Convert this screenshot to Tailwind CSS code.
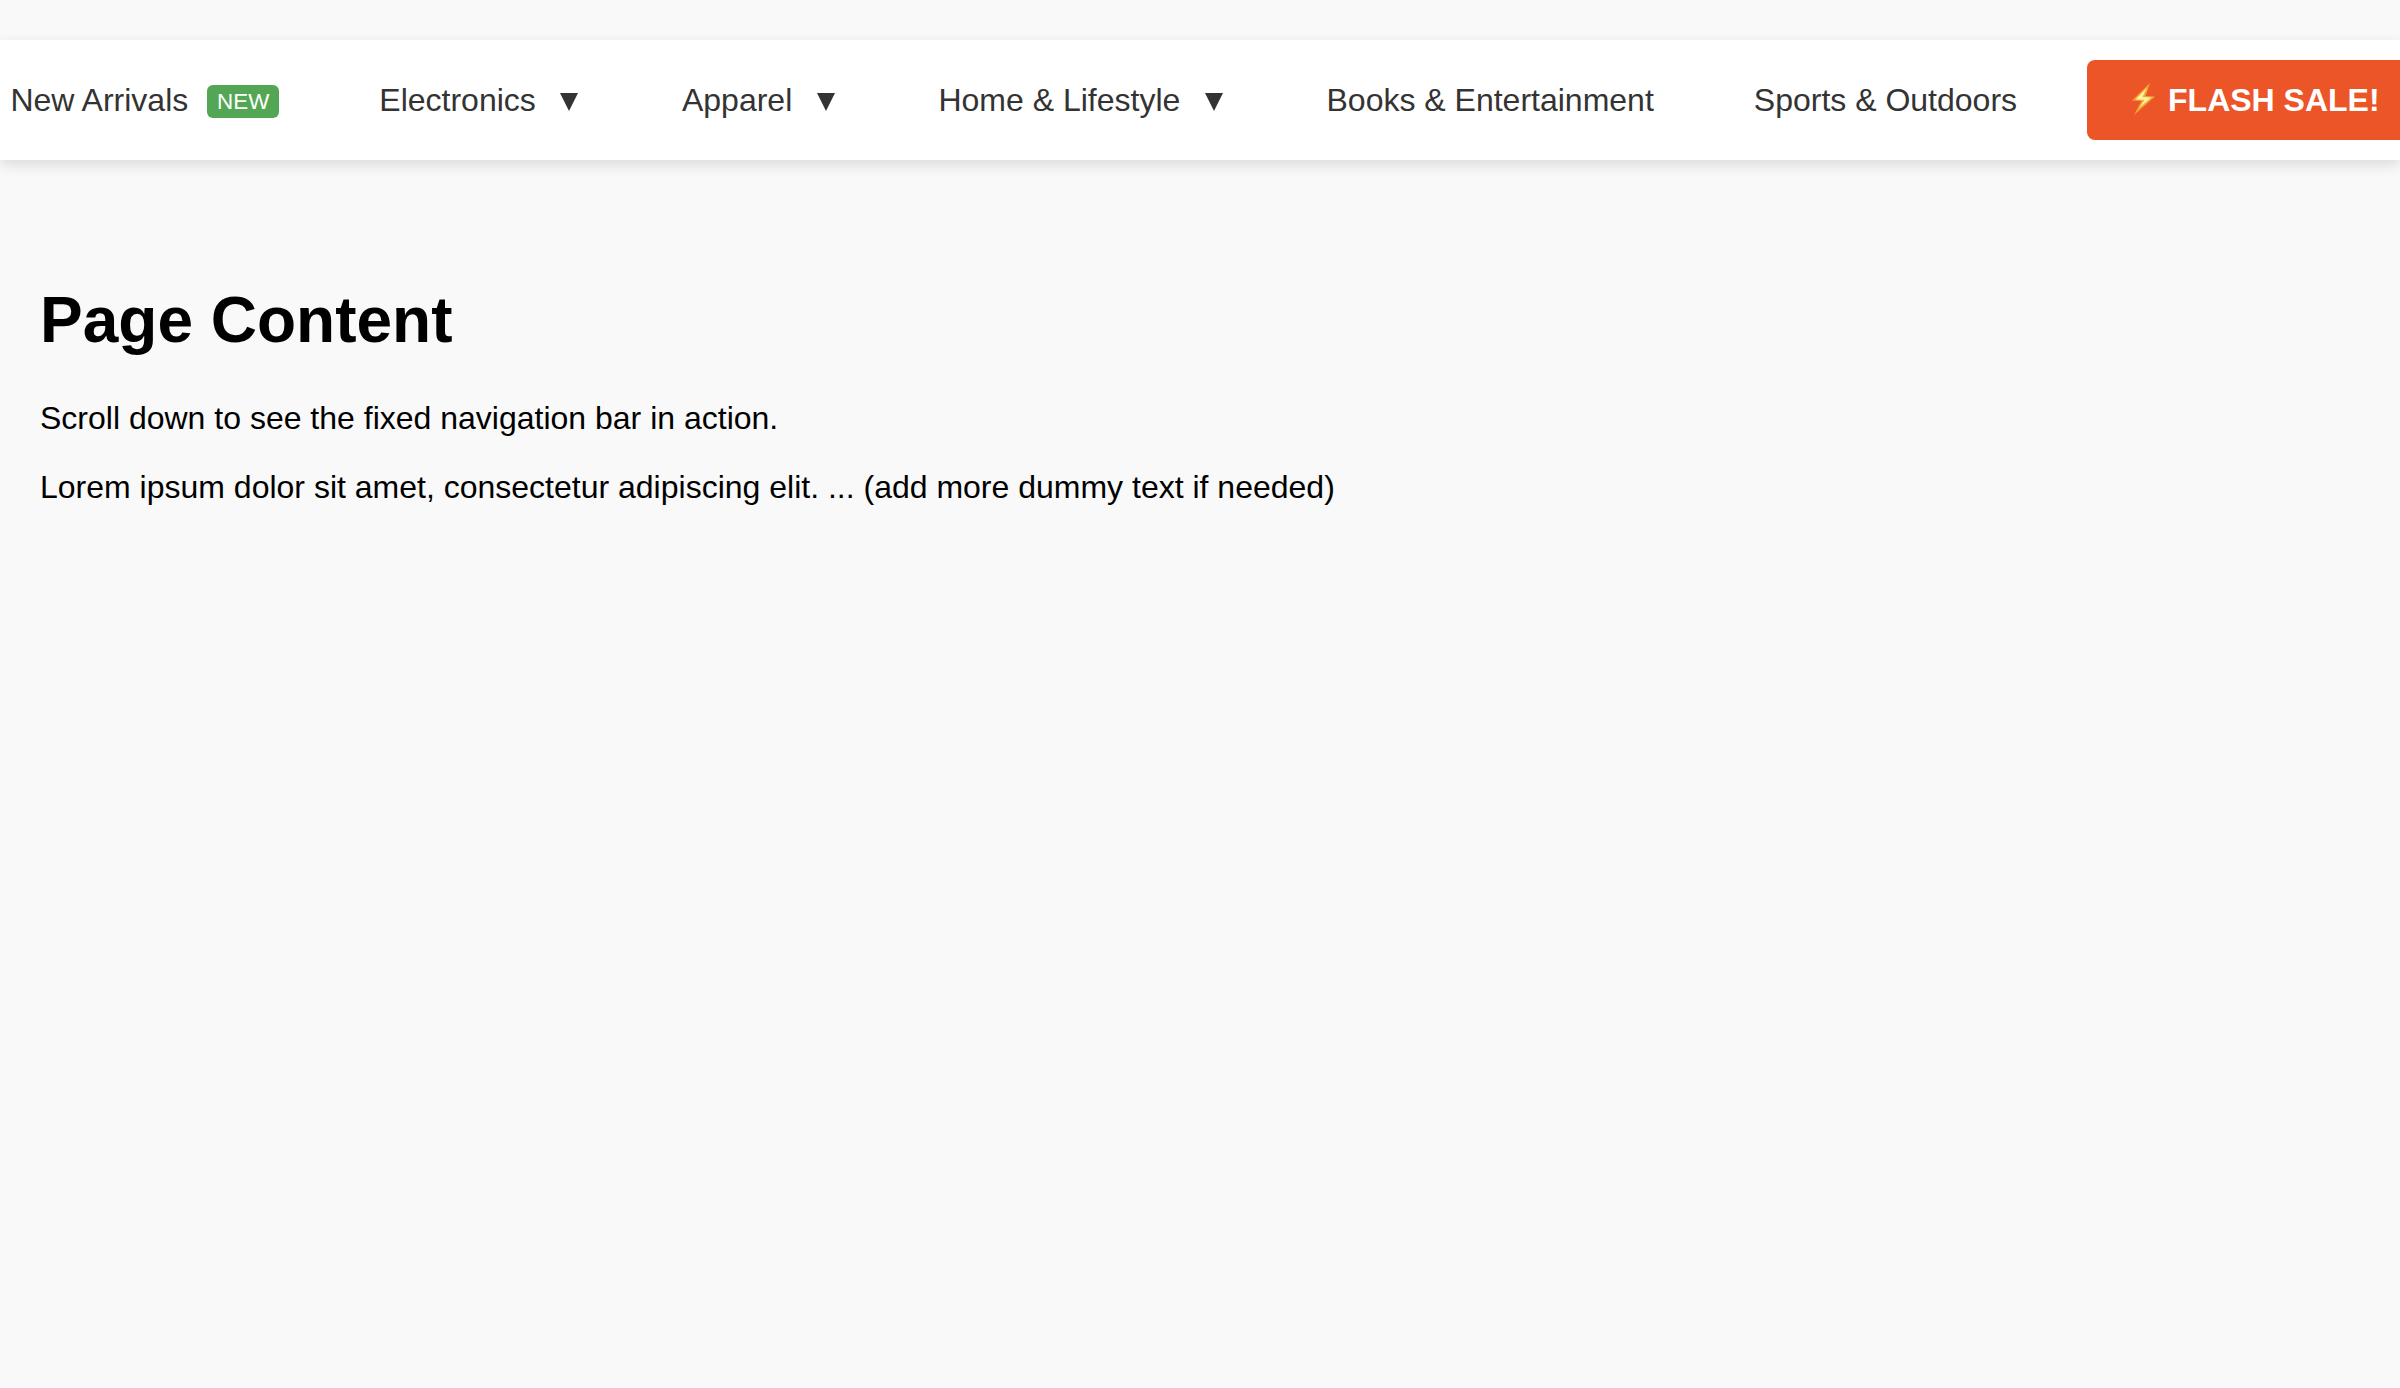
<!DOCTYPE html>
<html lang="en">
<head>
<meta charset="utf-8">
<title>Shop</title>
<script src="https://cdn.jsdelivr.net/npm/@tailwindcss/browser@4"></script>
</head>
<body class="min-h-screen overflow-hidden bg-[#f9f9f9] pt-10 font-['Liberation_Sans',Arial,sans-serif] text-[32px] leading-[37px] text-black">
<nav class="h-[120px] w-full bg-white shadow-[0_5px_13px_rgba(0,0,0,0.12)]">
  <ul class="flex h-full items-center justify-center gap-10 whitespace-nowrap text-[#333]">
    <li class="flex shrink-0 items-center px-[30px]">New Arrivals<span class="mt-[3px] ml-[18.8px] rounded-[6px] bg-[#53a653] px-[10px] py-1 text-[22.4px] leading-[25px] text-white">NEW</span></li>
    <li class="flex shrink-0 items-center px-[30px]">Electronics<svg class="mt-1 mr-[3.6px] ml-[24.6px] h-[18px] w-[18px]" viewBox="0 0 18 18" fill="#333"><path d="M0 0H18L9 18Z"/></svg></li>
    <li class="flex shrink-0 items-center px-[30px]">Apparel<svg class="mt-1 mr-[3.6px] ml-[24.6px] h-[18px] w-[18px]" viewBox="0 0 18 18" fill="#333"><path d="M0 0H18L9 18Z"/></svg></li>
    <li class="flex shrink-0 items-center px-[30px]">Home &amp; Lifestyle<svg class="mt-1 mr-[3.6px] ml-[24.6px] h-[18px] w-[18px]" viewBox="0 0 18 18" fill="#333"><path d="M0 0H18L9 18Z"/></svg></li>
    <li class="shrink-0 px-[30px]">Books &amp; Entertainment</li>
    <li class="shrink-0 px-[30px]">Sports &amp; Outdoors</li>
    <li class="flex h-20 shrink-0 items-center rounded-lg bg-[#ec5528] px-10 font-bold text-white"><svg class="mr-[9px] mb-[2px] h-8 w-8" viewBox="0 0 32 32"><path d="M23 0L5 17.500L14.500 18L7 32L28 13.500L18.500 13Z" fill="#f3a634"/><path d="M20 4.500L8.500 16.500L17.500 17L12 25L24.500 14.500L15.500 14Z" fill="#fff3a0"/></svg>FLASH SALE!</li>
  </ul>
</nav>
<main class="px-10 pt-[124px]">
  <h1 class="mb-[43px] text-[64px] leading-[73px] font-bold">Page Content</h1>
  <p class="mb-8">Scroll down to see the fixed navigation bar in action.</p>
  <p>Lorem ipsum dolor sit amet, consectetur adipiscing elit. ... (add more dummy text if needed)</p>
</main>
</body>
</html>
